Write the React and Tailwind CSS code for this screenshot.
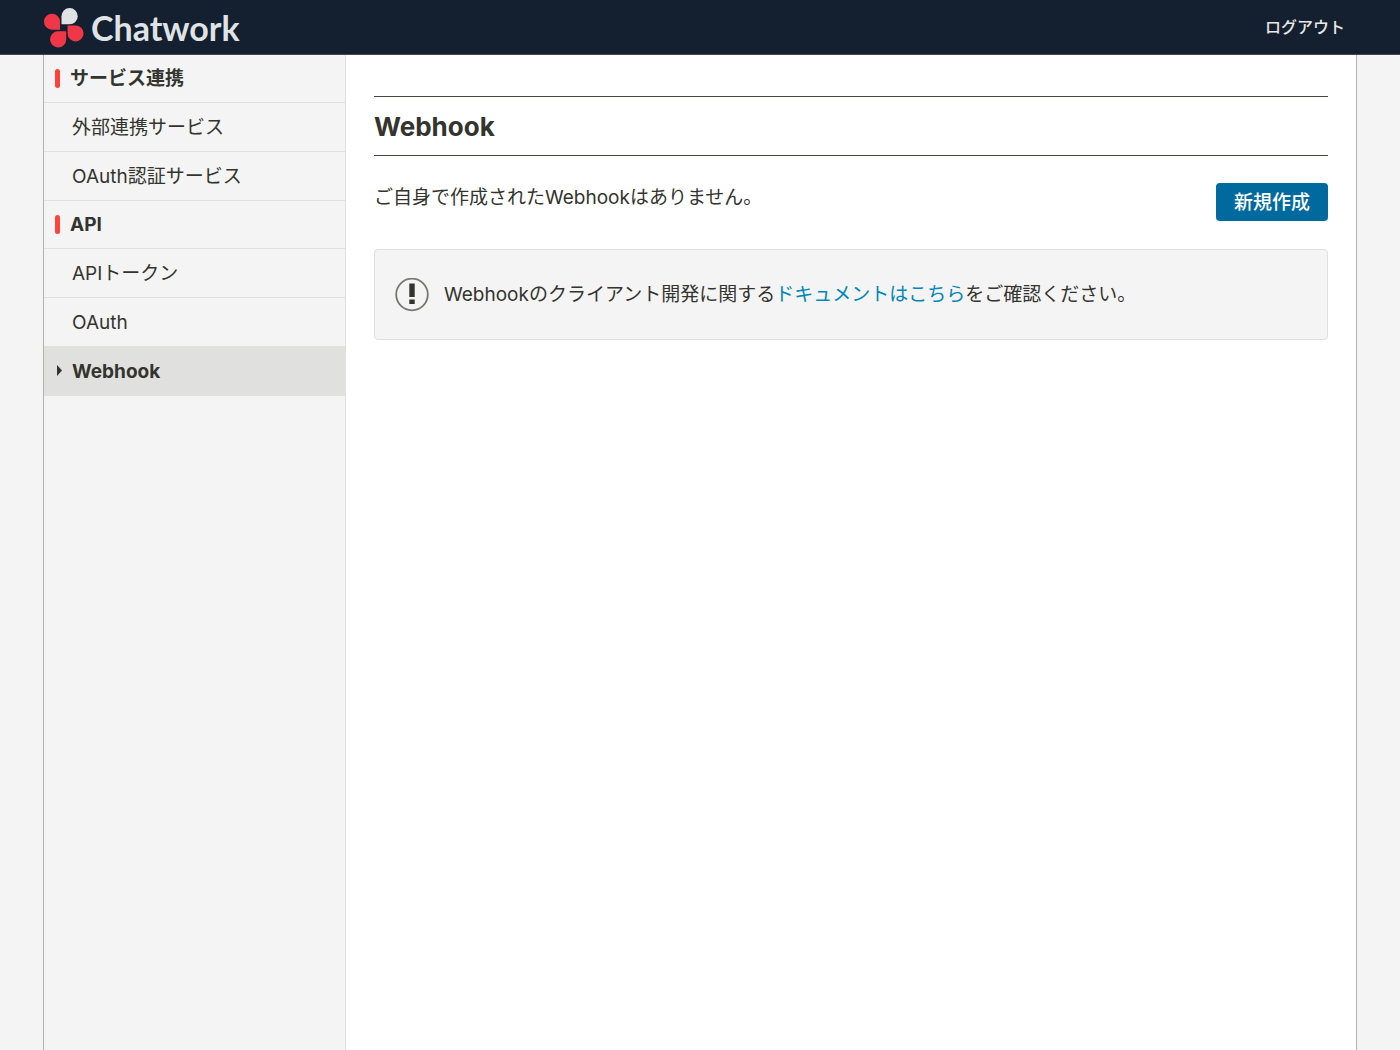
import React from 'react';

const menu = [
  {
    title: 'サービス連携',
    items: [
      { label: '外部連携サービス' },
      { label: 'OAuth認証サービス' },
    ],
  },
  {
    title: 'API',
    items: [
      { label: 'APIトークン' },
      { label: 'OAuth' },
      { label: 'Webhook', active: true },
    ],
  },
];

function LogoMark() {
  return (
    <svg width="40" height="40" viewBox="0 0 40 40" aria-hidden="true">
      <path d="M17.5 16V8.2A8.1 8.1 0 1 1 25.6 16.3H17.8Z" fill="#dfe3e6" />
      <path d="M16 22V13.6A8 8 0 1 0 8 21.7H15.7Z" fill="#f03748" />
      <path d="M23.6 17.6V25.4A8 8 0 1 0 31.5 17.4H23.8Z" fill="#f03748" />
      <path d="M22.2 23.5V31.5A8.1 8.1 0 1 1 14.1 23.3H22Z" fill="#f03748" />
    </svg>
  );
}

function Header() {
  return (
    <header className="flex h-[55px] items-center justify-between border-b border-[#414a57] bg-[#14202f] pl-11 pr-[55px]">
      <a href="#" className="flex items-center gap-[7px] pt-px text-[#dfe3e6]">
        <LogoMark />
        <span className="font-['Lato',sans-serif] text-[34px] font-bold leading-10">Chatwork</span>
      </a>
      <a href="#" className="text-base font-medium text-[#e8e8e4]">ログアウト</a>
    </header>
  );
}

function Sidebar() {
  return (
    <nav className="w-[302px] shrink-0 border-r border-[#e0e0de] bg-[#f4f4f4]">
      {menu.map((group) => (
        <section key={group.title}>
          <h2 className="flex h-12 items-center gap-[10px] border-b border-[#e0e0de] pl-[11px] font-bold">
            <span className="h-[19px] w-[5px] rounded-sm bg-[#ff4338]" />
            {group.title}
          </h2>
          <ul>
            {group.items.map((item) => (
              <li key={item.label}>
                <a
                  href="#"
                  aria-current={item.active ? 'page' : undefined}
                  className={`flex h-[49px] items-center border-b border-[#e0e0de] pt-[2px] ${
                    item.active ? 'bg-[#e0e0de] font-bold' : ''
                  }`}
                >
                  <span className="flex w-7 shrink-0 pb-1 pl-[13px]">
                    {item.active && (
                      <svg width="5" height="11" viewBox="0 0 5 11" aria-hidden="true">
                        <path d="M0 0L5 5.5L0 11Z" fill="#33342e" />
                      </svg>
                    )}
                  </span>
                  {item.label}
                </a>
              </li>
            ))}
          </ul>
        </section>
      ))}
    </nav>
  );
}

function WebhookPage() {
  return (
    <main className="min-w-0 flex-1 px-7 pt-[41px]">
      <h1 className="border-y border-[#44453f] pb-3 pt-[14px] text-[26px] font-bold leading-8">
        Webhook
      </h1>

      <div className="mt-[27px] flex items-start justify-between gap-4">
        <p className="leading-[30px]">ご自身で作成されたWebhookはありません。</p>
        <button
          type="button"
          className="h-[38px] w-28 shrink-0 rounded bg-[#00699e] pt-px font-medium text-white"
        >
          新規作成
        </button>
      </div>

      <div className="mt-7 flex h-[91px] items-center gap-[15px] rounded border border-[#e0e0de] bg-[#f4f4f4] px-5">
        <svg width="34" height="34" viewBox="0 0 34 34" className="shrink-0" aria-hidden="true">
          <circle cx="17" cy="16.5" r="15.8" fill="none" stroke="#777872" strokeWidth="1.8" />
          <path d="M14.3 5.5H19.7V19H14.3ZM14.3 21.5H19.7V26H14.3Z" fill="#33342e" />
        </svg>
        <p>
          Webhookのクライアント開発に関する
          <a href="#" className="text-[#0086b8]">ドキュメントはこちら</a>
          をご確認ください。
        </p>
      </div>
    </main>
  );
}

function App() {
  return (
    <div
      lang="ja"
      className="flex min-h-screen flex-col bg-[#f4f4f4] font-['Inter','Noto_Sans_CJK_JP',sans-serif] text-[19px] leading-7 text-[#33342e]"
    >
      <Header />
      <div className="mx-[43px] flex flex-1 border-x border-[#b3b3ae] bg-white">
        <Sidebar />
        <WebhookPage />
      </div>
    </div>
  );
}

export default App;
